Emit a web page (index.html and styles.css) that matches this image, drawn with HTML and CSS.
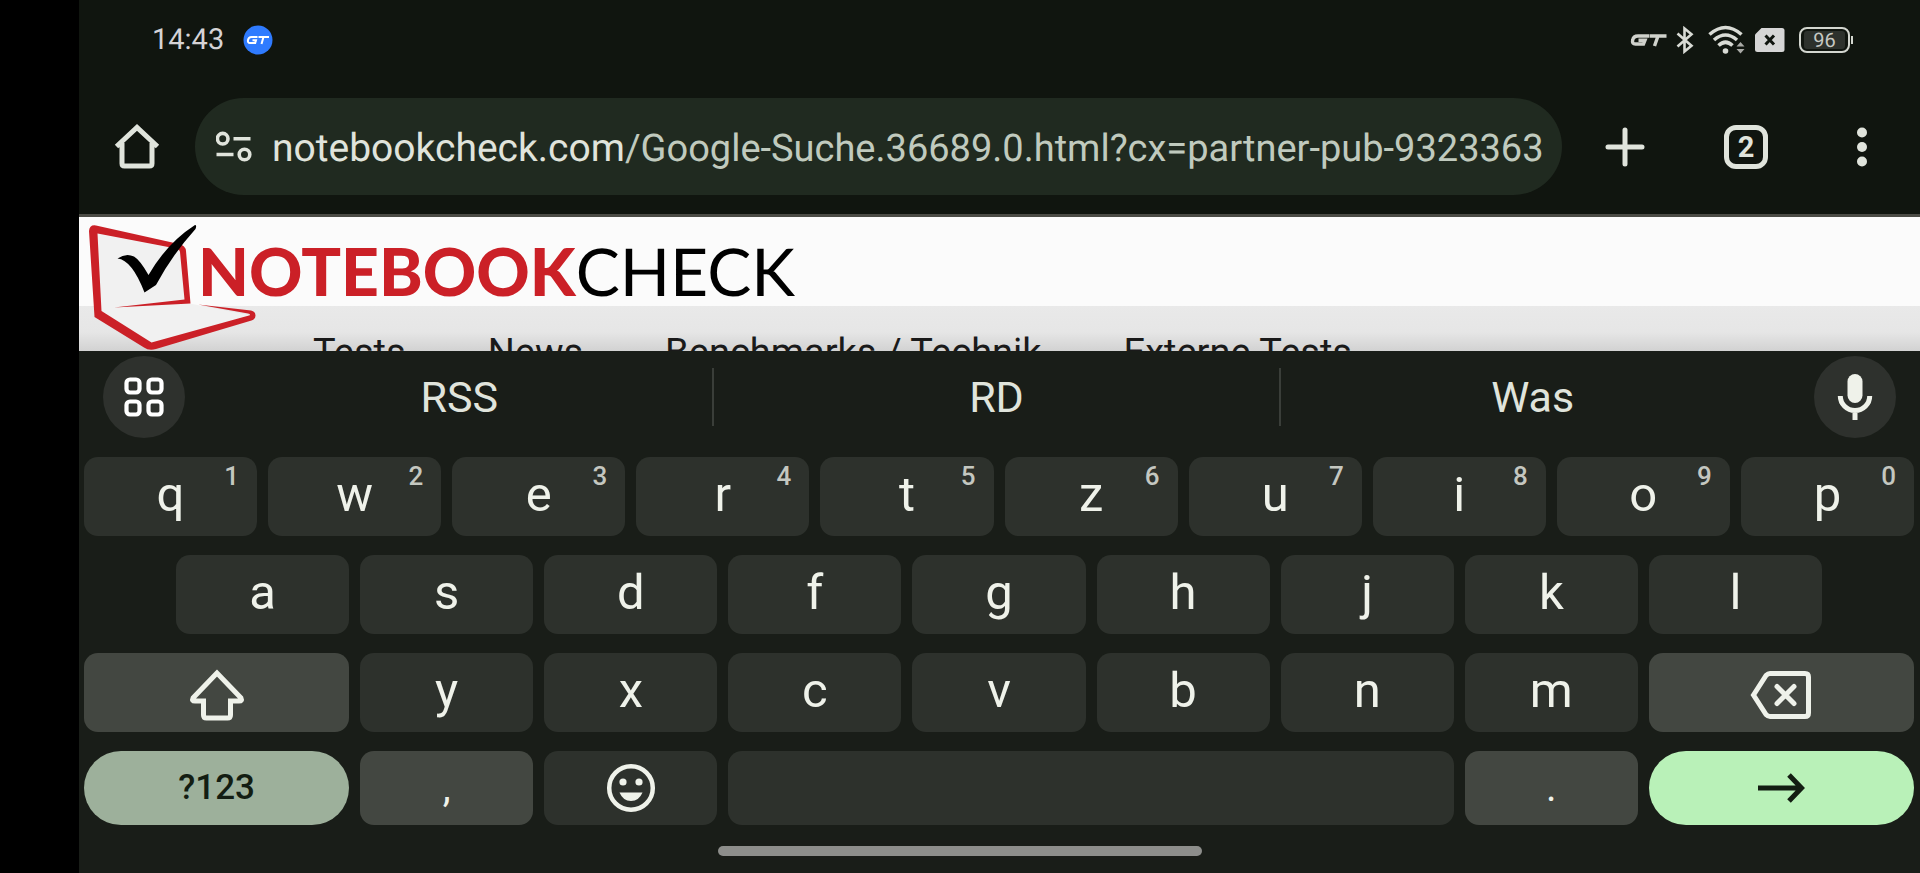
FILE: index.html
```html
<!DOCTYPE html>
<html lang="de">
<head>
<meta charset="utf-8">
<title>Notebookcheck</title>
<link rel="stylesheet" href="styles.css">
</head>
<body>
<div class="screen">
  <header class="status">
    <span class="clock">14:43</span>
    <svg class="badge" width="30" height="30" viewBox="0 0 30 30" aria-hidden="true">
      <circle cx="15" cy="15" r="14.5" fill="#2f7bff"/>
      <g fill="none" stroke="#fff" stroke-width="2"><path d="M14.5 12H8.5Q5.600 12 5 15Q4.500 18 7 18H12.200L13 15.300H9.500"/><path d="M15.500 12H26M20.500 12L18.500 19"/></g>
    </svg>
    <div class="status-icons">
      <svg width="38" height="14" viewBox="0 0 38 14" aria-hidden="true"><g fill="none" stroke="#d0d2cc" stroke-width="3.400"><path d="M19 3H8Q3.500 3 2.700 7Q1.700 11 5.500 11H13.500L15 7.300H8.500"/><path d="M19.500 3H36.500M28 3L24.500 13"/></g></svg>
      <svg class="bt" width="18" height="28" viewBox="0 0 18 28" aria-hidden="true"><path d="M1.500 7.500L15.500 19.800L8.500 25.500V2.500L15.500 8.200L1.500 20.500" fill="none" stroke="#d9dbd5" stroke-width="2.600"/></svg>
      <svg class="wifi" width="38" height="30" viewBox="0 0 38 30" aria-hidden="true"><g fill="none" stroke="#d9dbd5" stroke-width="3.600"><path d="M1.500 9.500Q17.500 -4.500 33.500 9.500"/><path d="M6 15Q17.500 5 29 15"/><path d="M10.500 20.500Q17.500 14 24.500 20.500"/></g><circle cx="17.500" cy="26" r="2.800" fill="#d9dbd5"/><path d="M28.500 21.500L32.500 17L36.500 21.500ZM28.500 24L32.500 28.500L36.500 24Z" fill="#a9aaa6"/></svg>
      <svg class="sim" width="30" height="24" viewBox="0 0 30 24" aria-hidden="true"><path d="M6.500 0H27Q29.500 0 29.500 2.500V21.500Q29.500 24 27 24H2.500Q0 24 0 21.500V6.500Z" fill="#d6d6d6"/><path d="M10.500 7.500L19 16.500M19 7.500L10.500 16.500" stroke="#10150f" stroke-width="3"/></svg>
      <div class="battery"><span class="charge">96</span></div>
    </div>
  </header>

  <div class="toolbar">
    <button class="tool home" type="button" aria-label="Startseite">
      <svg width="46" height="46" viewBox="0 0 46 46"><path d="M2.500 22.500L23 3.500L43.500 22.500M8 19V39.500Q8 42 10.500 42H35.500Q38 42 38 39.500V19" fill="none" stroke="#e0e4dc" stroke-width="5" stroke-linejoin="miter"/></svg>
    </button>
    <div class="omnibox">
      <svg class="site" width="36" height="32" viewBox="0 0 36 32" aria-hidden="true"><g fill="none" stroke="#e0e4dc" stroke-width="3.600"><circle cx="6.700" cy="7.700" r="5.300"/><circle cx="28.500" cy="23.500" r="5.300"/><path d="M17.500 7.700H34.500M.500 23.500H17.500"/></g></svg>
      <div class="url" role="textbox" aria-label="Adresse">notebookcheck.com<span class="path">/Google-Suche.36689.0.html?cx=partner-pub-9323363</span></div>
    </div>
    <button class="tool" type="button" aria-label="Neuer Tab"><svg width="40" height="40" viewBox="0 0 40 40"><path d="M20 3V37M3 20H37" stroke="#e0e4dc" stroke-width="5" stroke-linecap="round"/></svg></button>
    <button class="tool tabs" type="button" aria-label="Tabs"><span class="tab-count">2</span></button>
    <button class="tool menu" type="button" aria-label="Menü"><svg width="10" height="40" viewBox="0 0 10 40"><g fill="#e0e4dc"><circle cx="5" cy="5.500" r="5"/><circle cx="5" cy="20" r="5"/><circle cx="5" cy="34.500" r="5"/></g></svg></button>
  </div>

  <main class="page">
    <a class="brand" href="#">
      <svg class="laptop" width="172" height="130" viewBox="0 0 172 130" aria-hidden="true">
        <path d="M5 8L94 25L98 78L165 91L62 121L8 90Z" fill="#f1f1f1"/>
        <path fill="#cb2027" fill-rule="evenodd" d="M0 6Q.500 -.500 7 .500L90 19Q96.500 20.500 97 26L101.500 78.500L25 82.500L95.500 74.500L91 27Q90.500 24 87 23.500L8.500 8.500L12.500 86L62.500 117.500L160 90.500Q162.500 89.500 159 88.500L109 79.500L162 85.500Q166.500 86.500 166.500 90.500Q166.500 94 162.500 95.500L67 124Q60 126 55 122.500L5.500 92Z"/>
        <path d="M28.500 33.500Q37 27.500 45 31.500Q51 35 59.500 50Q78 18 106 0Q108 0 106.500 4Q83 30 67 60L55.500 67.500Q43 35 28.500 33.500Z" fill="#000"/>
      </svg>
      <span class="wordmark"><b class="red">NOTEBOOK</b><span class="black">CHECK</span></span>
    </a>
    <nav class="nav"><a href="#">Tests</a><a href="#">News</a><a href="#">Benchmarks / Technik</a><a href="#">Externe Tests</a></nav>
  </main>

  <section class="keyboard" aria-label="Tastatur">
    <div class="suggest">
      <button class="round" type="button" aria-label="Funktionen"><svg width="40" height="40" viewBox="0 0 40 40"><g fill="none" stroke="#fff" stroke-width="4.200"><rect x="2.500" y="2.500" width="13" height="13" rx="3.500"/><rect x="24.500" y="2.500" width="13" height="13" rx="3.500"/><rect x="2.500" y="24.500" width="13" height="13" rx="3.500"/><rect x="24.500" y="24.500" width="13" height="13" rx="3.500"/></g></svg></button>
      <div class="words"><button type="button">RSS</button><button type="button">RD</button><button type="button">Was</button></div>
      <button class="round" type="button" aria-label="Spracheingabe"><svg width="36" height="48" viewBox="0 0 36 48"><rect x="10.500" y="1" width="15" height="29" rx="7.500" fill="#eff2ea"/><path d="M3.300 23A14.700 14.500 0 0 0 32.700 23M18 37V47" fill="none" stroke="#eff2ea" stroke-width="5"/></svg></button>
    </div>
    <div class="keys">
      <button class="key" type="button">q<sup>1</sup></button><button class="key" type="button">w<sup>2</sup></button><button class="key" type="button">e<sup>3</sup></button><button class="key" type="button">r<sup>4</sup></button><button class="key" type="button">t<sup>5</sup></button><button class="key" type="button">z<sup>6</sup></button><button class="key" type="button">u<sup>7</sup></button><button class="key" type="button">i<sup>8</sup></button><button class="key" type="button">o<sup>9</sup></button><button class="key" type="button">p<sup>0</sup></button>
      <button class="key indent" type="button">a</button><button class="key" type="button">s</button><button class="key" type="button">d</button><button class="key" type="button">f</button><button class="key" type="button">g</button><button class="key" type="button">h</button><button class="key" type="button">j</button><button class="key" type="button">k</button><button class="key" type="button">l</button>
      <button class="key wide alt first icon" type="button" aria-label="Umschalt"><svg width="56" height="54" viewBox="0 0 56 54"><path d="M28 5L4 30Q2.500 33 6 33H14.500V47Q14.500 50 17.500 50H38.500Q41.500 50 41.500 47V33H50Q53.500 33 52 30Z" fill="none" stroke="#eff2ea" stroke-width="5"/></svg></button><button class="key" type="button">y</button><button class="key" type="button">x</button><button class="key" type="button">c</button><button class="key" type="button">v</button><button class="key" type="button">b</button><button class="key" type="button">n</button><button class="key" type="button">m</button><button class="key wide alt icon" type="button" aria-label="Löschen"><svg width="62" height="50" viewBox="0 0 62 50"><path d="M3.500 25L16 5.500Q18 3.500 20 3.500H55Q58.500 3.500 58.500 7V43Q58.500 46.500 55 46.500H20Q18 46.500 16 44.500Z" fill="none" stroke="#eff2ea" stroke-width="5"/><path d="M27 16.500L44 33.500M44 16.500L27 33.500" stroke="#eff2ea" stroke-width="5" stroke-linecap="round"/></svg></button>
      <button class="key wide low pill sym" type="button">?123</button><button class="key low alt punct" type="button">,</button><button class="key low" type="button" aria-label="Emoji"><svg width="50" height="50" viewBox="0 0 50 50"><circle cx="25" cy="25" r="21.800" fill="none" stroke="#eff2ea" stroke-width="4.500"/><circle cx="17" cy="19" r="3.600" fill="#eff2ea"/><circle cx="33" cy="19" r="3.600" fill="#eff2ea"/><path d="M13.500 29.500H36.500Q33 38 25 38T13.500 29.500Z" fill="#eff2ea"/></svg></button><button class="key low space" type="button" aria-label="Leertaste"></button><button class="key low alt punct" type="button">.</button><button class="key wide low pill go" type="button" aria-label="Öffnen"><svg width="48" height="30" viewBox="0 0 48 30"><path d="M1 15H44M32 2L44.500 15L32 28" fill="none" stroke="#131d12" stroke-width="5"/></svg></button>
    </div>
    <div class="handle"></div>
  </section>
</div>
</body>
</html>
```
FILE: styles.css
```css
* { box-sizing: border-box; }
body {
  margin: 0;
  min-height: 100vh;
  padding-left: 79px;
  background: #000;
  font-family: Roboto, sans-serif;
  text-rendering: geometricPrecision;
}
button { border: 0; padding: 0; margin: 0; background: none; color: inherit; font: inherit; }
a { color: inherit; text-decoration: none; }
svg { display: block; flex: none; }
.screen {
  display: flex;
  flex-direction: column;
  min-height: 100vh;
  background: #10150f;
  color: #e0e4dc;
}

.status { display: flex; align-items: center; height: 79px; padding: 0 70px 0 73px; }
.clock { font-size: 29px; color: #d5d3d6; }
.badge { margin-left: 19px; }
.status-icons { display: flex; align-items: center; margin-left: auto; }
.bt { margin-left: 8px; }
.wifi { margin-left: 14px; }
.sim { margin-left: 9px; }
.battery {
  position: relative;
  width: 51px;
  height: 26px;
  margin-left: 14px;
  padding: 2px 3px;
  border: 2px solid #d3d6cf;
  border-radius: 8px;
}
.battery::after {
  content: "";
  position: absolute;
  top: 7px;
  right: -5px;
  width: 2px;
  height: 8px;
  background: #d3d6cf;
}
.charge {
  display: block;
  background: #2d312c;
  border-radius: 3px;
  color: #c6c8c3;
  font-size: 20px;
  line-height: 18px;
  text-align: center;
}

.toolbar { display: flex; align-items: center; height: 135px; padding: 0 53px 0 35px; }
.tool { display: flex; align-items: center; justify-content: center; }
.home { margin-right: 35px; }
.omnibox {
  display: flex;
  align-items: center;
  flex: 1;
  min-width: 0;
  height: 97px;
  margin-right: 43px;
  padding: 0 19px 0 21px;
  border-radius: 49px;
  background: #202a20;
}
.url {
  flex: 1;
  min-width: 0;
  margin-left: 20px;
  padding-top: 3px;
  overflow: hidden;
  white-space: nowrap;
  font-size: 39px;
  line-height: 56px;
}
.path { color: #c0cabe; font-size: 38px; }
.tabs { width: 44px; height: 44px; margin-left: 79px; border: 5px solid #e0e4dc; border-radius: 12px; }
.tab-count { font-size: 29px; font-weight: 700; line-height: 34px; }
.menu { margin-left: 89px; }

.page {
  height: 137px;
  overflow: hidden;
  border-top: 3px solid #4b4b45;
  background: linear-gradient(#fbfbfb 89px, #e9e9e9 89px, #e6e6e6 115px, #d2d2d2 134px);
  color: #1a1a1a;
}
.brand { display: flex; height: 114px; padding: 8px 0 0 10px; }
.wordmark {
  margin-left: -63px;
  padding-top: 9px;
  font-family: Lato, sans-serif;
  font-size: 66px;
  line-height: 76px;
  white-space: nowrap;
}
.red { color: #cb2027; font-weight: 900; }
.black { color: #000; }
.nav { display: flex; gap: 82px; padding-left: 234px; font-size: 38px; line-height: 44px; }

.keyboard { flex: 1; padding: 5px 6px 0 5px; background: #191d18; color: #eff2ea; }
.suggest { display: flex; align-items: center; padding: 0 18px 0 19px; }
.round {
  display: flex;
  align-items: center;
  justify-content: center;
  flex: none;
  width: 82px;
  height: 82px;
  border-radius: 50%;
  background: #2e312d;
}
.words {
  display: grid;
  grid-template-columns: 8fr 9fr 8fr;
  flex: 1;
  padding: 0 30px 0 22px;
  color: #e0e4dc;
  font-size: 43px;
  line-height: 58px;
}
.words button + button { border-left: 2px solid #3a3e39; }
.keys { display: grid; grid-template-columns: repeat(20, 1fr); gap: 19px 11px; padding-top: 19px; }
.key {
  position: relative;
  display: flex;
  align-items: center;
  justify-content: center;
  grid-column: span 2;
  height: 79px;
  padding-bottom: 4px;
  border-radius: 14px;
  background: #2d312c;
  font-size: 49px;
  line-height: 58px;
}
.key sup { position: absolute; top: 5px; right: 18px; color: #c4c7c0; font-size: 26px; font-weight: 500; line-height: 28px; }
.indent { grid-column: 2 / span 2; }
.wide { grid-column: span 3; }
.first { grid-column: 1 / span 3; }
.icon { padding: 4px 0 0; }
.low { height: 74px; padding: 0; }
.space { grid-column: span 8; }
.alt { background: #434741; }
.pill { border-radius: 37px; }
.sym { background: #9db09b; color: #131d12; font-size: 35px; font-weight: 500; }
.punct { font-size: 40px; }
.go { background: #b9f1b8; }
.handle { width: 484px; height: 10px; margin: 21px 0 0 calc(50% - 281px); border-radius: 5px; background: #8d8e8b; }
```
